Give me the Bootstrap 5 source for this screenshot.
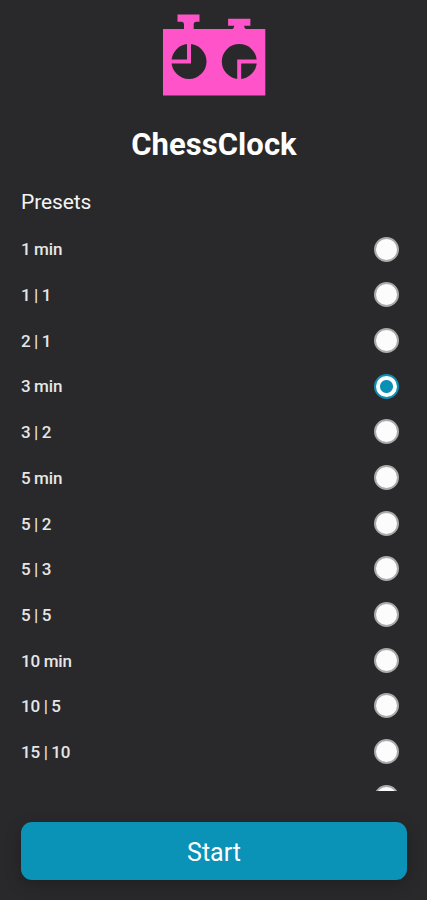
<!DOCTYPE html>
<html lang="en">
<head>
<meta charset="utf-8">
<meta name="viewport" content="width=device-width, initial-scale=1">
<title>ChessClock</title>
<link href="https://cdn.jsdelivr.net/npm/bootstrap@5.3.0/dist/css/bootstrap.min.css" rel="stylesheet">
<style>
body { background: #29292b; color: #f4f4f4; font-family: Roboto, "Liberation Sans", sans-serif; }
.screen { height: 900px; padding: 0 20px 20px 21px; }
.logo { width: 104px; height: 84px; margin-top: 13px; }
.app-title { font-size: 31px; line-height: 36px; margin-top: 30px; letter-spacing: .05px; color: #fff; }
.section-title { font-size: 21px; line-height: 26px; margin-top: 26px; letter-spacing: -.1px; }
.presets { height: 565px; margin-top: 11.4px; padding-right: 8px; }
.preset { height: 45.68px; font-size: 17px; font-weight: 500; letter-spacing: -.1px; word-spacing: -.6px; color: #e6e6e6; }
.preset span { padding-top: 2px; }
.preset .form-check-input { width: 25px; height: 25px; margin-right: .5px !important; background: #fcfcfc; border: 2px solid #aaa; }
.preset .form-check-input:checked { border: 2px solid #0a90b4; background: radial-gradient(circle, #0a90b4 0 6px, #fff 7px); box-shadow: none; }
.start { height: 58px; border-radius: 11px; background: #0a92b7; color: #fff; font-size: 25px; line-height: 1; padding-top: 8px; box-shadow: 0 5px 16px rgba(0,0,0,.22); }
.start:hover { background: #0a92b7; color: #fff; }
</style>
<script src="https://cdn.jsdelivr.net/npm/bootstrap@5.3.0/dist/js/bootstrap.bundle.min.js" defer></script>
</head>
<body>
<main class="screen d-flex flex-column overflow-hidden">
  <svg class="logo align-self-center flex-shrink-0" viewBox="162 13 104 84" aria-hidden="true">
    <path fill="#fe53c9" d="M177.500 14.500h22v7.300h-3.600q-2.200.4-2.200 2.500v4.700h38.800q1.600-.8 1.800-3.300h-6.200v-7h22.300v7h-6.300q.2 2.500 1.800 3.300h19.400v66.500H163V29h21v-4.700q0-2.100-2.200-2.500h-4.300z"/>
    <g fill="#29292b"><circle cx="189" cy="61.5" r="17.5"/><circle cx="239.300" cy="61.5" r="17.5"/></g>
    <path fill="none" stroke="#fe53c9" stroke-width="4" d="M189 43v18.500h-18.500M239.200 80V61.500h18.500"/>
  </svg>
  <h1 class="app-title text-center fw-bold mb-0">ChessClock</h1>
  <h2 class="section-title fw-normal mb-0">Presets</h2>
  <div class="presets overflow-hidden flex-shrink-0">
    <label class="preset d-flex align-items-center justify-content-between"><span>1 min</span><input class="form-check-input m-0" type="radio" name="preset"></label>
    <label class="preset d-flex align-items-center justify-content-between"><span>1 | 1</span><input class="form-check-input m-0" type="radio" name="preset"></label>
    <label class="preset d-flex align-items-center justify-content-between"><span>2 | 1</span><input class="form-check-input m-0" type="radio" name="preset"></label>
    <label class="preset d-flex align-items-center justify-content-between"><span>3 min</span><input class="form-check-input m-0" type="radio" name="preset" checked></label>
    <label class="preset d-flex align-items-center justify-content-between"><span>3 | 2</span><input class="form-check-input m-0" type="radio" name="preset"></label>
    <label class="preset d-flex align-items-center justify-content-between"><span>5 min</span><input class="form-check-input m-0" type="radio" name="preset"></label>
    <label class="preset d-flex align-items-center justify-content-between"><span>5 | 2</span><input class="form-check-input m-0" type="radio" name="preset"></label>
    <label class="preset d-flex align-items-center justify-content-between"><span>5 | 3</span><input class="form-check-input m-0" type="radio" name="preset"></label>
    <label class="preset d-flex align-items-center justify-content-between"><span>5 | 5</span><input class="form-check-input m-0" type="radio" name="preset"></label>
    <label class="preset d-flex align-items-center justify-content-between"><span>10 min</span><input class="form-check-input m-0" type="radio" name="preset"></label>
    <label class="preset d-flex align-items-center justify-content-between"><span>10 | 5</span><input class="form-check-input m-0" type="radio" name="preset"></label>
    <label class="preset d-flex align-items-center justify-content-between"><span>15 | 10</span><input class="form-check-input m-0" type="radio" name="preset"></label>
    <label class="preset d-flex align-items-center justify-content-end"><input class="form-check-input m-0" type="radio" name="preset" aria-label="More presets"></label>
  </div>
  <button type="button" class="btn start w-100 border-0 mt-auto flex-shrink-0">Start</button>
</main>
</body>
</html>
